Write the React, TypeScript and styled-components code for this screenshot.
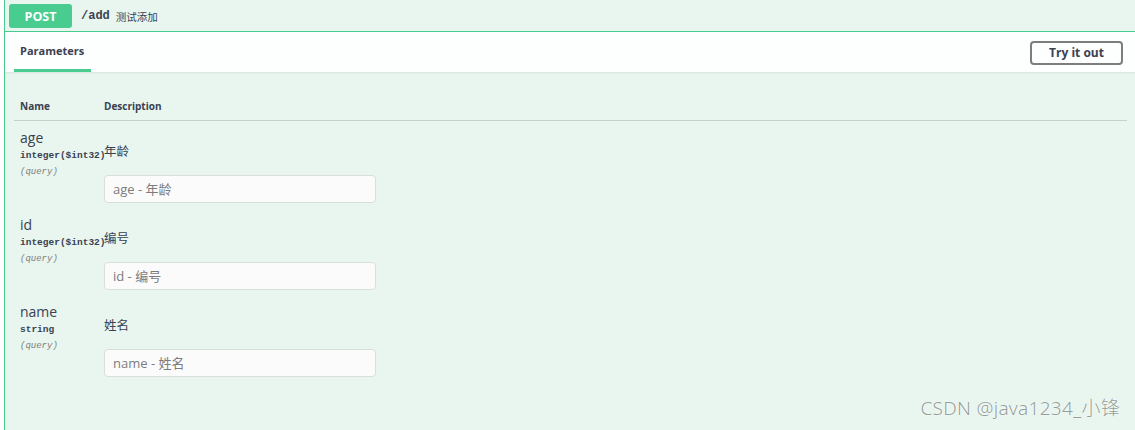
import React from "react";
import styled, { createGlobalStyle } from "styled-components";

const GlobalStyle = createGlobalStyle`
  html, body {
    margin: 0;
    padding: 0;
    background: #ffffff;
    overflow: hidden;
  }
  body {
    width: 1135px;
    height: 430px;
    font-family: "Open Sans", "Noto Sans CJK SC", sans-serif;
    color: #3b4151;
  }
`;

const Page = styled.div`
  position: relative;
  width: 1135px;
  height: 430px;
  overflow: hidden;
`;

const Opblock = styled.div`
  margin: -2px 0 0 4px;
  width: 1138px;
  height: 440px;
  border: 1px solid #49cc90;
  border-right: none;
  background: #e8f6ef;
  box-sizing: border-box;
`;

const Summary = styled.div`
  display: flex;
  align-items: center;
  height: 33px;
  padding: 0 4px;
  border-bottom: 1px solid #49cc90;
  box-sizing: border-box;
`;

const Method = styled.span`
  display: inline-flex;
  align-items: center;
  justify-content: center;
  width: 63px;
  height: 24px;
  margin-top: 2px;
  border-radius: 3px;
  background: #49cc90;
  color: #ffffff;
  font-family: "Open Sans", sans-serif;
  font-weight: 700;
  font-size: 12.5px;
`;

const Path = styled.span`
  margin-left: 9px;
  margin-top: 2px;
  font-family: "Liberation Mono", monospace;
  font-weight: 700;
  font-size: 12px;
  color: #3b4151;
`;

const SummaryText = styled.span`
  margin-left: 6px;
  margin-top: 2px;
  font-family: "Noto Sans CJK SC", sans-serif;
  font-size: 10.5px;
  color: #3b4151;
`;

const SectionHeader = styled.div`
  display: flex;
  align-items: stretch;
  justify-content: space-between;
  height: 40px;
  padding: 0 19px 0 9px;
  background: rgba(255, 255, 255, 0.9);
  box-shadow: 0 1px 2px rgba(0, 0, 0, 0.08);
`;

const Tab = styled.div`
  display: flex;
  align-items: center;
  padding: 0 6px;
  width: 77px;
  box-sizing: border-box;
  border-bottom: 3px solid #49cc90;
  font-size: 11px;
  font-weight: 700;
  color: #3b4151;
`;

const TryButton = styled.button`
  align-self: center;
  width: 93px;
  height: 24px;
  margin-top: 1px;
  background: transparent;
  border: 2px solid #7d7d7d;
  border-radius: 4px;
  font-family: "Open Sans", sans-serif;
  font-size: 12px;
  font-weight: 700;
  color: #3b4151;
  padding: 0;
`;

const TableWrap = styled.div`
  padding: 20px 15px 0 9px;
`;

const HeadRow = styled.div`
  display: grid;
  grid-template-columns: 90px 1fr;
  height: 28px;
  align-items: center;
  border-bottom: 1px solid #c5d1cb;
  font-size: 10px;
  font-weight: 700;
  color: #3b4151;
`;

const HeadCell = styled.div<{ $pad?: number }>`
  padding-left: ${(p) => p.$pad ?? 0}px;
`;

const Rows = styled.div`
  padding-top: 8px;
`;

const ParamRow = styled.div`
  display: grid;
  grid-template-columns: 90px 1fr;
  height: 87px;
`;

const NameCell = styled.div`
  padding-left: 6px;
  display: flex;
  flex-direction: column;
`;

const ParamName = styled.div`
  font-size: 14px;
  line-height: 18px;
  color: #3b4151;
`;

const ParamType = styled.div`
  margin-top: 1px;
  font-family: "Liberation Mono", monospace;
  font-size: 9.5px;
  font-weight: 700;
  line-height: 16px;
  color: #3b4151;
  white-space: nowrap;
`;

const ParamIn = styled.div`
  font-family: "Liberation Mono", monospace;
  font-size: 9px;
  font-style: italic;
  line-height: 16px;
  color: #808080;
`;

const DescCell = styled.div`
  display: flex;
  flex-direction: column;
`;

const Desc = styled.div`
  margin-top: 14px;
  font-family: "Noto Sans CJK SC", sans-serif;
  font-size: 12.5px;
  line-height: 16px;
  color: #3b4151;
`;

const Input = styled.input`
  margin-top: 16px;
  width: 272px;
  height: 28px;
  box-sizing: border-box;
  border: 1px solid #d9e0dc;
  border-radius: 4px;
  background: #fbfbfb;
  padding: 0 8px;
  font-family: "Open Sans", "Noto Sans CJK SC", sans-serif;
  font-size: 13px;
  color: #3b4151;
  &::placeholder {
    color: #7c7c7c;
  }
`;

const Watermark = styled.div`
  position: absolute;
  right: 15px;
  bottom: 9px;
  font-family: "Noto Sans", "Noto Sans CJK SC", sans-serif;
  font-size: 19px;
  font-weight: 300;
  color: #959d98;
  text-shadow: 0 0 1px #ffffff, 0 0 2px #ffffff;
  letter-spacing: 0.3px;
`;

const params = [
  { name: "age", type: "integer($int32)", desc: "年龄" },
  { name: "id", type: "integer($int32)", desc: "编号" },
  { name: "name", type: "string", desc: "姓名" },
];

export default function App() {
  return (
    <Page>
      <GlobalStyle />
      <Opblock>
        <Summary>
          <Method>POST</Method>
          <Path>/add</Path>
          <SummaryText>测试添加</SummaryText>
        </Summary>
        <SectionHeader>
          <Tab>Parameters</Tab>
          <TryButton>Try it out</TryButton>
        </SectionHeader>
        <TableWrap>
          <HeadRow>
            <HeadCell $pad={6}>Name</HeadCell>
            <HeadCell>Description</HeadCell>
          </HeadRow>
          <Rows>
            {params.map((p) => (
              <ParamRow key={p.name}>
                <NameCell>
                  <ParamName>{p.name}</ParamName>
                  <ParamType>{p.type}</ParamType>
                  <ParamIn>(query)</ParamIn>
                </NameCell>
                <DescCell>
                  <Desc>{p.desc}</Desc>
                  <Input placeholder={`${p.name} - ${p.desc}`} />
                </DescCell>
              </ParamRow>
            ))}
          </Rows>
        </TableWrap>
      </Opblock>
      <Watermark>CSDN @java1234_小锋</Watermark>
    </Page>
  );
}
